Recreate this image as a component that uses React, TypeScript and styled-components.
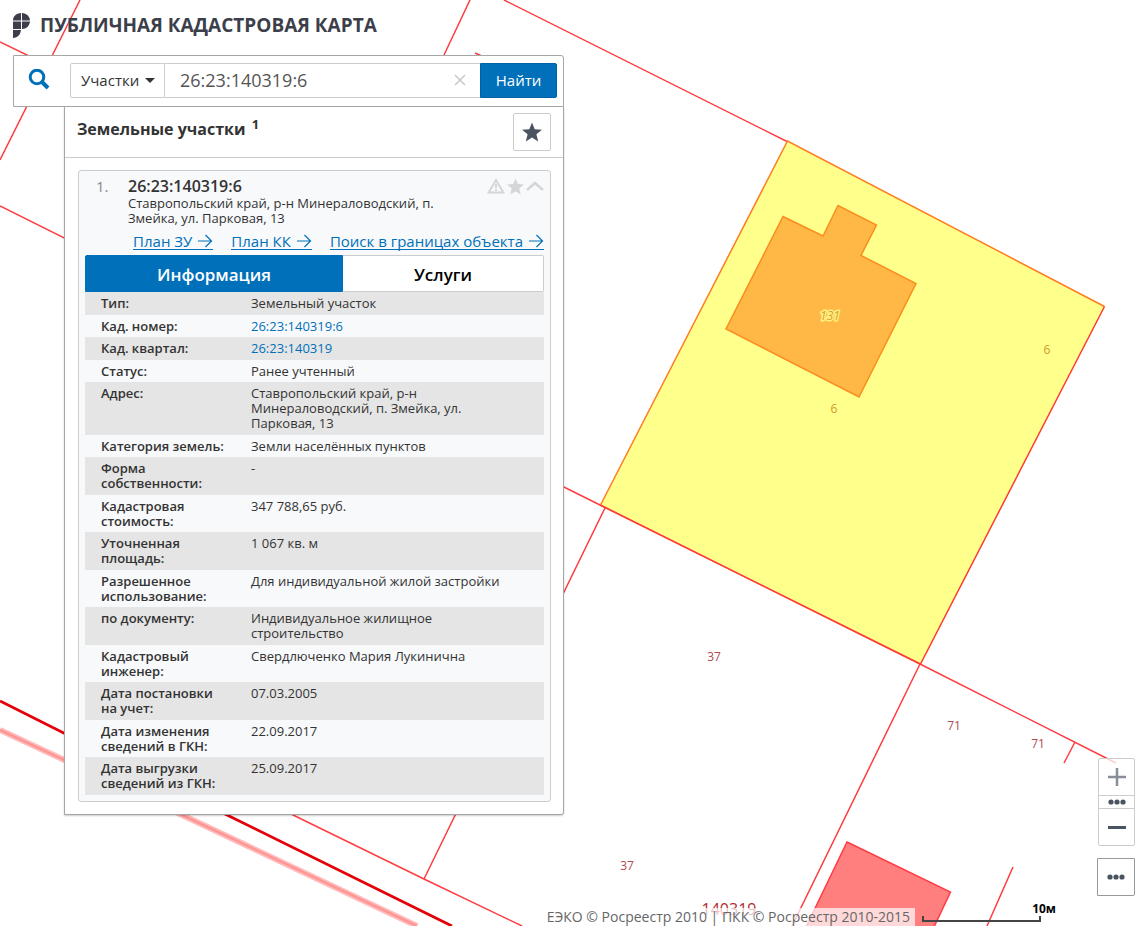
import React from "react";
import styled, { createGlobalStyle } from "styled-components";

const GlobalStyle = createGlobalStyle`
  *, *::before, *::after { box-sizing: border-box; }
  body {
    margin: 0;
    background: #fff;
    color: #333;
    font-family: "Open Sans", "Noto Sans", sans-serif;
    font-size: 13px;
    line-height: 15px;
  }
  button, input, select { font-family: inherit; color: inherit; margin: 0; }
`;

const blue = "#0070ba";

const Page = styled.div`
  position: relative;
  min-height: 100vh;
  padding: 8px 12px 0 13px;
  overflow: hidden;
`;

const MapCanvas = styled.svg`
  position: absolute;
  inset: 0;
  width: 100%;
  height: 100%;
`;

const MapLabel = styled.text`
  font-size: 12px;
  fill: #b04a50;
  text-anchor: middle;
`;

const ParcelLabel = styled(MapLabel)`
  fill: #d09a28;
`;

const BuildingLabel = styled(MapLabel)`
  fill: #d8a030;
  stroke: #fff080;
  stroke-width: 3px;
  paint-order: stroke;
  font-style: italic;
`;

const QuarterLabel = styled(MapLabel)`
  font-size: 16px;
  fill: #b02a30;
`;

const Sidebar = styled.div`
  position: relative;
  width: 551px;
  max-width: 100%;
`;

const Brand = styled.header`
  display: flex;
  align-items: center;
  gap: 10px;
  height: 34px;
  margin-bottom: 13px;
`;

const BrandTitle = styled.h1`
  margin: 0;
  font-size: 19px;
  line-height: 24px;
  font-weight: 700;
  color: #3c3f4a;
  white-space: nowrap;
`;

const SearchBar = styled.form`
  display: flex;
  align-items: center;
  height: 52px;
  padding: 0 6px 2px 14px;
  background: #fff;
  border: 1px solid #a6a6a6;
  border-radius: 0 3px 0 0;
`;

const SearchIconBox = styled.span`
  display: flex;
  width: 42px;
`;

const TypeField = styled.label`
  position: relative;
  display: flex;
  align-items: center;
  height: 35px;
  border: 1px solid #ccc;
  border-radius: 2px 0 0 2px;
`;

const TypeSelect = styled.select`
  appearance: none;
  width: 93px;
  height: 100%;
  padding: 0 20px 0 10px;
  border: 0;
  background: transparent;
  font-size: 15px;
`;

const Caret = styled.svg`
  position: absolute;
  right: 9px;
  pointer-events: none;
`;

const QueryField = styled.div`
  display: flex;
  flex: 1;
  align-items: center;
  min-width: 0;
  height: 35px;
  border: solid #ccc;
  border-width: 1px 0;
`;

const QueryInput = styled.input`
  flex: 1;
  min-width: 0;
  height: 100%;
  padding: 0 0 0 15px;
  border: 0;
  background: transparent;
  color: #555;
  font-size: 18px;
`;

const PlainButton = styled.button`
  display: flex;
  align-items: center;
  justify-content: center;
  padding: 0;
  border: 0;
  background: transparent;
`;

const ClearButton = styled(PlainButton)`
  width: 40px;
  height: 100%;
`;

const FindButton = styled.button`
  width: 77px;
  height: 35px;
  padding: 0;
  border: 1px solid #0062a5;
  border-radius: 0 2px 2px 0;
  background: ${blue};
  color: #fff;
  font-size: 15px;
`;

const Panel = styled.main`
  margin: -1px 0 0 51px;
  background: #fff;
  border: 1px solid #a6a6a6;
  border-radius: 0 0 3px 0;
  box-shadow: 0 1px 2px rgba(0, 0, 0, 0.2);
`;

const PanelHeader = styled.div`
  display: flex;
  align-items: flex-start;
  justify-content: space-between;
  height: 51px;
  padding: 6px 12px 0;
  border-bottom: 1px solid #ccc;
`;

const PanelTitle = styled.h2`
  margin: 5px 0 0;
  font-size: 16px;
  line-height: 22px;
  font-weight: 700;
`;

const Count = styled.sup`
  margin-left: 2px;
  font-size: 13px;
  line-height: 0;
`;

const FavoriteButton = styled(PlainButton)`
  width: 38px;
  height: 38px;
  border: 1px solid #ccc;
  border-radius: 2px;
`;

const Card = styled.article`
  margin: 12px 12px 12px 13px;
  padding: 8px 6px 6px;
  background: #f8f9fb;
  border: 1px solid #ccc;
  border-radius: 3px;
`;

const CardHead = styled.div`
  display: flex;
  align-items: flex-start;
  padding-left: 11px;
`;

const Index = styled.span`
  width: 32px;
  font-size: 15px;
  color: #888;
`;

const CardInfo = styled.div`
  flex: 1;
`;

const CardTitle = styled.h3`
  margin: 0 0 2px;
  font-size: 16px;
  line-height: 15px;
  font-weight: 600;
`;

const Address = styled.p`
  max-width: 330px;
  margin: 0;
`;

const CardActions = styled.div`
  display: flex;
  gap: 2px;
  height: 14px;
`;

const LinkRow = styled.nav`
  display: flex;
  justify-content: flex-end;
  gap: 18px;
  height: 29px;
  padding-top: 6px;
`;

const PlanLink = styled.a`
  display: flex;
  align-items: center;
  gap: 5px;
  height: 18px;
  border-bottom: 1px solid ${blue};
  color: ${blue};
  font-size: 15px;
  line-height: 16px;
  text-decoration: none;
  white-space: nowrap;
`;

const Tabs = styled.div`
  display: flex;
`;

const Tab = styled.button<{ $active?: boolean }>`
  flex: ${(p) => (p.$active ? "0 1 258px" : "1 1 0")};
  height: 37px;
  padding: 2px 0 0;
  border: ${(p) => (p.$active ? `1px solid ${blue}` : "1px solid #ccc")};
  border-left-width: ${(p) => (p.$active ? "1px" : "0")};
  border-radius: ${(p) => (p.$active ? "2px 0 0 0" : "0 2px 2px 0")};
  background: ${(p) => (p.$active ? blue : "#fff")};
  color: ${(p) => (p.$active ? "#fff" : "#000")};
  font-size: 17px;
  font-weight: 600;
`;

const Details = styled.table`
  width: 100%;
  border-collapse: collapse;
`;

const DetailRow = styled.tr`
  &:nth-child(odd) { background: #e5e5e5; }
  &:nth-child(even) > * { padding-bottom: 3px; }
`;

const DetailName = styled.th`
  width: 151px;
  padding: 4px 8px 4px 16px;
  text-align: left;
  vertical-align: top;
  font-weight: 600;
`;

const DetailValue = styled.td`
  padding: 4px 36px 4px 15px;
  vertical-align: top;
`;

const DetailLink = styled.a`
  color: ${blue};
  text-decoration: none;
`;

const MapControls = styled.div`
  position: absolute;
  right: 12px;
  bottom: 30px;
  display: flex;
  flex-direction: column;
  align-items: flex-end;
  gap: 12px;
`;

const ZoomGroup = styled.div`
  width: 37px;
  background: rgba(255, 255, 255, 0.75);
  border: 1px solid #ccc;
  border-radius: 2px;
`;

const ZoomButton = styled(PlainButton)<{ $faded?: boolean }>`
  width: 100%;
  height: 36px;
  opacity: ${(p) => (p.$faded ? 0.65 : 1)};
`;

const LevelsButton = styled(PlainButton)`
  width: 100%;
  height: 14px;
  border: solid #ccc;
  border-width: 1px 0;
`;

const MoreButton = styled(PlainButton)`
  width: 38px;
  height: 38px;
  background: #fff;
  border: 1px solid #999;
  border-radius: 0 0 2px 0;
`;

const MapFooter = styled.footer`
  position: absolute;
  right: 91px;
  bottom: 0;
  display: flex;
  align-items: flex-end;
  gap: 7px;
`;

const Attribution = styled.div`
  padding: 0 5px;
  background: rgba(255, 255, 255, 0.7);
  color: #666;
  font-size: 14px;
  line-height: 18px;
  white-space: nowrap;
`;

const Scale = styled.div`
  display: flex;
  flex-direction: column;
  width: 134px;
  margin-bottom: 4px;
  color: #000;
  font-size: 12px;
  font-weight: 700;
  line-height: 14px;
  text-align: right;
`;

const ScaleBar = styled.span`
  width: 119px;
  height: 6px;
  border: solid #444;
  border-width: 0 2px 2px;
`;

const Dots = () => (
  <svg width="18" height="6" viewBox="0 0 18 6" fill="#4a5360">
    <circle cx="3" cy="3" r="2.6" />
    <circle cx="9" cy="3" r="2.6" />
    <circle cx="15" cy="3" r="2.6" />
  </svg>
);

const Star = ({ size, color }: { size: number; color: string }) => (
  <svg width={size} height={size} viewBox="0 0 20 20" fill={color}>
    <path d="M10 0.5 12.7 7.2 20 7.7 14.4 12.3 16.2 19.5 10 15.5 3.8 19.5 5.6 12.3 0 7.7 7.3 7.2Z" />
  </svg>
);

const Arrow = () => (
  <svg width="16" height="14" viewBox="0 0 16 14" fill="none" stroke={blue} strokeWidth="1.2">
    <path d="M1 7H14.500M8.500 1 14.500 7 8.500 13" />
  </svg>
);

const ParcelMap = () => (
  <MapCanvas aria-hidden="true">
    <g fill="none" stroke="#ff3c40" strokeWidth="1.5">
      <path d="M80 0 0 160M0 42 64 73M470 0 444 55M475 53 500 64M504 0 788 142" />
      <path d="M0 206 600 505 920 664 1116 763M605 508 424 879M291 814 424 879 522 926" />
      <path d="M920 664 792 926M1075 742 1064 763M1013 867 987 926" />
    </g>
    <path d="M0 730 180 814 417 926" fill="none" stroke="#ffbcbc" strokeWidth="6" />
    <path d="M0 730 180 814 417 926" fill="none" stroke="#ff9696" strokeWidth="2.5" />
    <path d="M0 701 225 814 452 926" fill="none" stroke="#e40008" strokeWidth="2.8" />
    <path d="M787.5 141 1104.5 306.5 920.5 664 600.5 505Z" fill="#ffff8c" />
    <path d="M600.5 505 787.5 141 1104.5 306.5" fill="none" stroke="#ff7c20" strokeWidth="1.5" />
    <path d="M1104.5 306.5 920.5 664 600.5 505" fill="none" stroke="#ff3c30" strokeWidth="1.5" />
    <path
      d="M783 216.500 823 236 838 205.500 876.500 225 861 255.500 916 283.500 859 397 726 329Z"
      fill="#ffb845"
      stroke="#fb8c20"
      strokeWidth="1.5"
    />
    <path d="M847 842 950.500 892 934 927H806Z" fill="#ff7f7f" stroke="#ff3c44" strokeWidth="1.500" />
    <BuildingLabel x="830" y="320">131</BuildingLabel>
    <ParcelLabel x="1047" y="354">6</ParcelLabel>
    <ParcelLabel x="834" y="413">6</ParcelLabel>
    <MapLabel x="714" y="661">37</MapLabel>
    <MapLabel x="954" y="730">71</MapLabel>
    <MapLabel x="1038" y="748">71</MapLabel>
    <MapLabel x="627" y="870">37</MapLabel>
    <QuarterLabel x="729" y="915">140319</QuarterLabel>
  </MapCanvas>
);

const details: { name: string; value: string; link?: boolean }[] = [
  { name: "Тип:", value: "Земельный участок" },
  { name: "Кад. номер:", value: "26:23:140319:6", link: true },
  { name: "Кад. квартал:", value: "26:23:140319", link: true },
  { name: "Статус:", value: "Ранее учтенный" },
  { name: "Адрес:", value: "Ставропольский край, р-н Минераловодский, п. Змейка, ул. Парковая, 13" },
  { name: "Категория земель:", value: "Земли населённых пунктов" },
  { name: "Форма собственности:", value: "-" },
  { name: "Кадастровая стоимость:", value: "347 788,65 руб." },
  { name: "Уточненная площадь:", value: "1 067 кв. м" },
  { name: "Разрешенное использование:", value: "Для индивидуальной жилой застройки" },
  { name: "по документу:", value: "Индивидуальное жилищное строительство" },
  { name: "Кадастровый инженер:", value: "Свердлюченко Мария Лукинична" },
  { name: "Дата постановки на учет:", value: "07.03.2005" },
  { name: "Дата изменения сведений в ГКН:", value: "22.09.2017" },
  { name: "Дата выгрузки сведений из ГКН:", value: "25.09.2017" },
];

const planLinks = ["План ЗУ", "План КК", "Поиск в границах объекта"];

export default function App() {
  return (
    <>
      <GlobalStyle />
      <Page>
        <ParcelMap />
        <Sidebar>
          <Brand>
            <svg width="17" height="25" viewBox="0 0 17 25" fill="#3c3f4a">
              <path d="M8 0V7.500H0C0 3 3.500 0.300 8 0ZM9 0C13.500 0.300 17 3.500 17 7.500H9ZM0 8.500H8V16H0ZM9 8.500H17C16.500 13 13.500 16 9 16ZM0 17H8C7.500 21.500 5 24.500 0 25Z" />
            </svg>
            <BrandTitle>ПУБЛИЧНАЯ КАДАСТРОВАЯ КАРТА</BrandTitle>
          </Brand>
          <SearchBar onSubmit={(e) => e.preventDefault()}>
            <SearchIconBox>
              <svg width="22" height="22" viewBox="0 0 22 22" fill="none" stroke={blue}>
                <circle cx="9" cy="8" r="6.800" strokeWidth="3" />
                <path d="M14 13 20 19" strokeWidth="4" />
              </svg>
            </SearchIconBox>
            <TypeField>
              <TypeSelect aria-label="Тип объекта" defaultValue="parcels">
                <option value="parcels">Участки</option>
              </TypeSelect>
              <Caret width="10" height="5" viewBox="0 0 10 5" fill="#333">
                <path d="M0 0H10L5 5Z" />
              </Caret>
            </TypeField>
            <QueryField>
              <QueryInput type="text" aria-label="Кадастровый номер" defaultValue="26:23:140319:6" />
              <ClearButton type="button" aria-label="Очистить">
                <svg width="12" height="12" viewBox="0 0 12 12" stroke="#c8c8c8" strokeWidth="1.500">
                  <path d="M1 1 11 11M11 1 1 11" />
                </svg>
              </ClearButton>
            </QueryField>
            <FindButton type="submit">Найти</FindButton>
          </SearchBar>
          <Panel>
            <PanelHeader>
              <PanelTitle>
                Земельные участки <Count>1</Count>
              </PanelTitle>
              <FavoriteButton type="button" aria-label="Избранное">
                <Star size={20} color="#4a5360" />
              </FavoriteButton>
            </PanelHeader>
            <Card>
              <CardHead>
                <Index>1.</Index>
                <CardInfo>
                  <CardTitle>26:23:140319:6</CardTitle>
                  <Address>Ставропольский край, р-н Минераловодский, п. Змейка, ул. Парковая, 13</Address>
                </CardInfo>
                <CardActions>
                  <PlainButton type="button" aria-label="Сообщить об ошибке">
                    <svg width="18" height="16" viewBox="0 0 18 16" fill="none" stroke="#d4d6d9" strokeWidth="2">
                      <path d="M9 2 16.300 14.500H1.700ZM9 6V10M9 11V13" />
                    </svg>
                  </PlainButton>
                  <PlainButton type="button" aria-label="В избранное">
                    <Star size={17} color="#d4d6d9" />
                  </PlainButton>
                  <PlainButton type="button" aria-label="Свернуть">
                    <svg width="18" height="16" viewBox="0 0 18 16" fill="none" stroke="#d4d6d9" strokeWidth="2.500">
                      <path d="M1 12 9 5 17 12" />
                    </svg>
                  </PlainButton>
                </CardActions>
              </CardHead>
              <LinkRow>
                {planLinks.map((text) => (
                  <PlanLink href="#" key={text}>
                    {text}
                    <Arrow />
                  </PlanLink>
                ))}
              </LinkRow>
              <Tabs>
                <Tab type="button" $active>Информация</Tab>
                <Tab type="button">Услуги</Tab>
              </Tabs>
              <Details>
                <tbody>
                  {details.map((d) => (
                    <DetailRow key={d.name}>
                      <DetailName scope="row">{d.name}</DetailName>
                      <DetailValue>{d.link ? <DetailLink href="#">{d.value}</DetailLink> : d.value}</DetailValue>
                    </DetailRow>
                  ))}
                </tbody>
              </Details>
            </Card>
          </Panel>
        </Sidebar>
        <MapControls>
          <ZoomGroup>
            <ZoomButton type="button" aria-label="Приблизить" $faded>
              <svg width="18" height="18" viewBox="0 0 18 18" stroke="#4a5360" strokeWidth="2.500">
                <path d="M0 9H18M9 0V18" />
              </svg>
            </ZoomButton>
            <LevelsButton type="button" aria-label="Масштабы">
              <Dots />
            </LevelsButton>
            <ZoomButton type="button" aria-label="Отдалить">
              <svg width="18" height="3" viewBox="0 0 18 3" fill="#4a5360">
                <path d="M0 0H18V3H0Z" />
              </svg>
            </ZoomButton>
          </ZoomGroup>
          <MoreButton type="button" aria-label="Ещё">
            <Dots />
          </MoreButton>
        </MapControls>
        <MapFooter>
          <Attribution>ЕЭКО © Росреестр 2010 | ПКК © Росреестр 2010-2015</Attribution>
          <Scale>
            10м
            <ScaleBar />
          </Scale>
        </MapFooter>
      </Page>
    </>
  );
}
